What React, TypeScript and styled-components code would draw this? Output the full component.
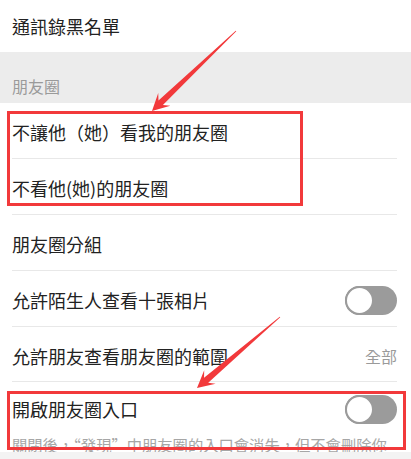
import React from "react";
import styled, { createGlobalStyle } from "styled-components";

const Global = createGlobalStyle`
  html, body { margin: 0; padding: 0; background: #ffffff; }
  body { font-family: "Noto Sans CJK TC", "Noto Sans", sans-serif; }
`;

const Page = styled.div`
  position: relative;
  width: 411px;
  height: 459px;
  overflow: hidden;
  background: #ffffff;
  display: flex;
  flex-direction: column;
`;

const TopRow = styled.div`
  height: 52px;
  display: flex;
  align-items: center;
  padding: 0 12px;
  font-size: 18px;
  color: #222;
  flex-shrink: 0;
`;

const Section = styled.div`
  height: 51px;
  background: #ececec;
  display: flex;
  align-items: flex-end;
  padding: 0 12px 5px;
  box-sizing: border-box;
  flex-shrink: 0;
`;

const SectionLabel = styled.span`
  font-size: 16px;
  line-height: 24px;
  color: #9a9a9a;
`;

const Row = styled.div<{ $h?: number; $divider?: boolean }>`
  height: ${(p) => p.$h ?? 56}px;
  margin: 0 14px 0 12px;
  padding-top: 3px;
  display: flex;
  align-items: center;
  justify-content: space-between;
  box-sizing: border-box;
  border-bottom: ${(p) => (p.$divider === false ? "none" : "1px solid #e8e8e8")};
  flex-shrink: 0;
`;

const Label = styled.span`
  font-size: 18px;
  color: #222;
  white-space: nowrap;
`;

const Value = styled.span`
  font-size: 16px;
  color: #9a9a9a;
`;

const Track = styled.div`
  width: 52px;
  height: 29px;
  border-radius: 15px;
  background: #9b9b9b;
  display: flex;
  align-items: center;
  flex-shrink: 0;
`;

const Knob = styled.div`
  width: 29px;
  height: 29px;
  box-sizing: border-box;
  border-radius: 50%;
  background: #ffffff;
  border: 2px solid #9b9b9b;
`;

const Description = styled.div`
  height: 19px;
  overflow: hidden;
  margin: 0 14px 0 12px;
  font-size: 15.3px;
  line-height: 22px;
  color: #a6a6a6;
  flex-shrink: 0;
`;

const Filler = styled.div`
  flex: 1;
  background: #f3f3f3;
`;

const Frame = styled.div`
  position: absolute;
  box-sizing: border-box;
  border: 3px solid #f2393b;
  pointer-events: none;
`;

const Overlay = styled.svg`
  position: absolute;
  left: 0;
  top: 0;
  pointer-events: none;
`;

function Toggle() {
  return (
    <Track>
      <Knob />
    </Track>
  );
}

function Arrow({ x0, y0, x1, y1 }: { x0: number; y0: number; x1: number; y1: number }) {
  const dx = x1 - x0;
  const dy = y1 - y0;
  const L = Math.sqrt(dx * dx + dy * dy);
  const a = (Math.atan2(dy, dx) * 180) / Math.PI;
  const pts = [
    [0, -0.4],
    [L - 12, -3.2],
    [L - 17, -8.8],
    [L, 0],
    [L - 17, 8.8],
    [L - 12, 3.2],
    [0, 0.4],
  ]
    .map((p) => p.join(","))
    .join(" ");
  return (
    <g transform={`translate(${x0} ${y0}) rotate(${a})`}>
      <polygon points={pts} fill="#f2393b" />
    </g>
  );
}

export default function App() {
  return (
    <>
      <Global />
      <Page>
        <TopRow>通訊錄黑名單</TopRow>
        <Section>
          <SectionLabel>朋友圈</SectionLabel>
        </Section>
        <Row>
          <Label>不讓他（她）看我的朋友圈</Label>
        </Row>
        <Row>
          <Label>不看他(她)的朋友圈</Label>
        </Row>
        <Row>
          <Label>朋友圈分組</Label>
        </Row>
        <Row>
          <Label>允許陌生人查看十張相片</Label>
          <Toggle />
        </Row>
        <Row $h={55}>
          <Label>允許朋友查看朋友圈的範圍</Label>
          <Value>全部</Value>
        </Row>
        <Row $h={51} $divider={false}>
          <Label>開啟朋友圈入口</Label>
          <Toggle />
        </Row>
        <Description>關閉後，“發現”中朋友圈的入口會消失，但不會刪除你的朋友圈</Description>
        <Filler />

        <Frame style={{ left: 7, top: 111, width: 296, height: 95 }} />
        <Frame style={{ left: 7, top: 391, width: 399, height: 59 }} />
        <Overlay width={411} height={459} viewBox="0 0 411 459">
          <Arrow x0={236} y0={31} x1={152} y1={111} />
          <Arrow x0={280} y0={317} x1={197} y1={388} />
        </Overlay>
      </Page>
    </>
  );
}
